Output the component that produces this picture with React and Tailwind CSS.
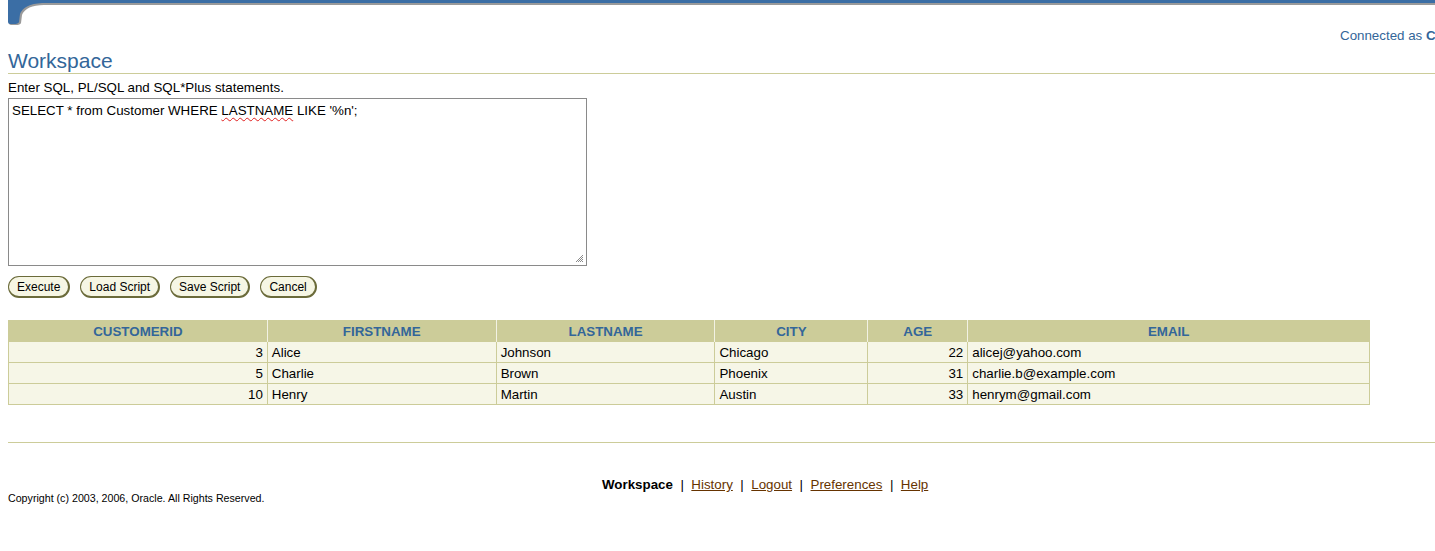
import React from "react";

const columns = [
  { name: "CUSTOMERID", w: "w-[259px]", num: true },
  { name: "FIRSTNAME", w: "w-[229px]" },
  { name: "LASTNAME", w: "w-[219px]" },
  { name: "CITY", w: "w-[153px]" },
  { name: "AGE", w: "w-[100px]", num: true },
  { name: "EMAIL", w: "w-[402px]" },
];

const rows = [
  ["3", "Alice", "Johnson", "Chicago", "22", "alicej@yahoo.com"],
  ["5", "Charlie", "Brown", "Phoenix", "31", "charlie.b@example.com"],
  ["10", "Henry", "Martin", "Austin", "33", "henrym@gmail.com"],
];

function Banner() {
  return (
    <svg className="block h-[26px] w-full" viewBox="0 0 1435 26" preserveAspectRatio="xMinYMin meet">
      <path d="M9,1 H1435 V5 H44 Q26,5 22,15 L21,23 Q20,25 16,25 H11 Q9,25 9,23 Z" fill="#9a9a9a" />
      <path d="M8,0 H1435 V3 H42 Q24,4 20,14 L19,22 Q18,24 14,24 H10 Q8,24 8,22 Z" fill="#3b6ea5" />
    </svg>
  );
}

function Btn({ children }) {
  return (
    <button className="h-[22px] px-[8px] rounded-full border border-[#6b6b3a] border-r-2 border-b-2 bg-[#f6f6e4] text-[12px] leading-[18px] text-black">
      {children}
    </button>
  );
}

export default function App() {
  return (
    <div className="relative h-[551px] w-full overflow-hidden bg-white font-['Liberation_Sans',Arial,sans-serif] text-black">
      <Banner />

      <div className="h-[20px] pt-[2px] pl-[1340px] whitespace-nowrap text-[13.33px] leading-[15px] text-[#336699]">
        Connected as <b>CUSTOMER</b>
      </div>

      <div className="ml-[8px] mt-[3px] border-b border-[#cccc99] text-[21px] leading-[24px] text-[#336699]">
        Workspace
      </div>

      <div className="mx-[8px] mt-[6px] text-[13.33px] leading-[15px]">
        Enter SQL, PL/SQL and SQL*Plus statements.
      </div>

      <div className="relative mx-[8px] mt-[3px] h-[168px] w-[579px] border border-[#8a8a8a] px-[3px] pt-[4px] text-[13.33px] leading-[15px]">
        SELECT * from Customer WHERE{" "}
        <span className="underline decoration-wavy decoration-[#e02020] decoration-1 underline-offset-2">LASTNAME</span>{" "}
        LIKE '%n';
        <svg className="absolute bottom-[2px] right-[2px] h-[10px] w-[10px]" viewBox="0 0 10 10">
          <path d="M9,2 L2,9 M9,4 L4,9 M9,6 L6,9 M9,8 L8,9" stroke="#8a8a8a" strokeWidth="1" />
        </svg>
      </div>

      <div className="mx-[8px] mt-[10px] flex gap-[10px]">
        <Btn>Execute</Btn>
        <Btn>Load Script</Btn>
        <Btn>Save Script</Btn>
        <Btn>Cancel</Btn>
      </div>

      <table className="mx-[8px] mt-[22px] w-[1362px] border-collapse border border-[#cccc99] text-[13.33px]">
        <thead>
          <tr className="bg-[#cccc99]">
            {columns.map((c, i) => (
              <th
                key={c.name}
                className={`${c.w} h-[21px] p-0 text-center font-bold leading-[15px] text-[#336699] ${i < columns.length - 1 ? "border-r border-[#f2f2e4]" : ""}`}
              >
                {c.name}
              </th>
            ))}
          </tr>
        </thead>
        <tbody>
          {rows.map((r) => (
            <tr key={r[0]} className="bg-[#f6f6e7]">
              {r.map((v, i) => (
                <td
                  key={i}
                  className={`h-[21px] border border-[#cccc99] px-[4px] py-0 leading-[15px] ${columns[i].num ? "text-right" : "text-left"}`}
                >
                  {v}
                </td>
              ))}
            </tr>
          ))}
        </tbody>
      </table>

      <div className="ml-[8px] mt-[37px] border-t border-[#cccc99]" />

      <div className="mt-[34px] flex items-start">
        <div className="w-[602px] pl-[8px] pt-[15px] text-[10.67px] leading-[13px]">
          Copyright (c) 2003, 2006, Oracle. All Rights Reserved.
        </div>
        <div className="flex gap-[7.5px] text-[13.33px] leading-[15px]">
          <b>Workspace</b>
          <span>|</span>
          <a className="text-[#663300] underline">History</a>
          <span>|</span>
          <a className="text-[#663300] underline">Logout</a>
          <span>|</span>
          <a className="text-[#663300] underline">Preferences</a>
          <span>|</span>
          <a className="text-[#663300] underline">Help</a>
        </div>
      </div>
    </div>
  );
}
